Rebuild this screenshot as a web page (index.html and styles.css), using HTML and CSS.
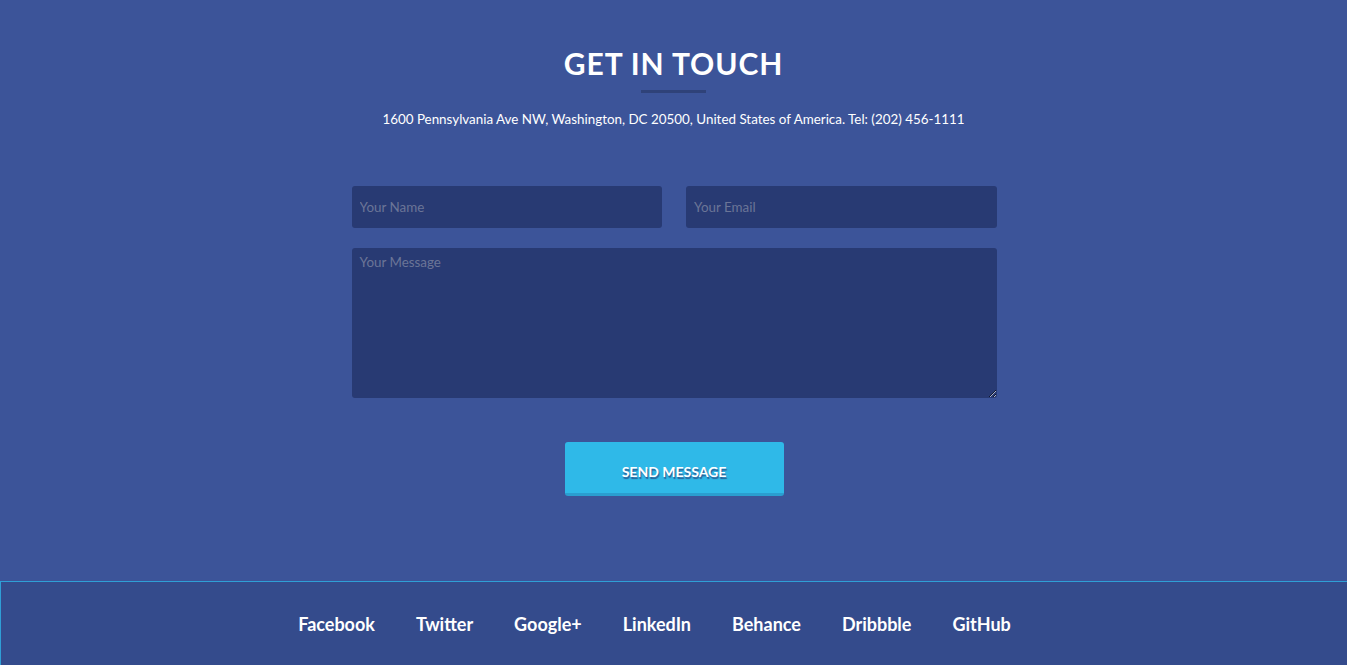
FILE: index.html
```html
<!DOCTYPE html>
<html lang="en">
<head>
<meta charset="utf-8">
<title>Get in touch</title>
<link rel="stylesheet" href="styles.css">
</head>
<body>
<section class="contact">
  <h2 class="contact-title">GET IN TOUCH</h2>
  <div class="title-rule"></div>
  <p class="address">1600 Pennsylvania Ave NW, Washington, DC 20500, United States of America. Tel: (202) 456-1111</p>
  <form class="contact-form">
    <div class="row">
      <input class="field" type="text" placeholder="Your Name">
      <input class="field" type="email" placeholder="Your Email">
    </div>
    <textarea class="field message" placeholder="Your Message"></textarea>
    <div class="actions">
      <button class="send" type="button">SEND MESSAGE</button>
    </div>
  </form>
</section>
<footer class="footer">
  <ul class="social">
    <li><a href="#">Facebook</a></li>
    <li><a href="#">Twitter</a></li>
    <li><a href="#">Google+</a></li>
    <li><a href="#">LinkedIn</a></li>
    <li><a href="#">Behance</a></li>
    <li><a href="#">Dribbble</a></li>
    <li><a href="#">GitHub</a></li>
  </ul>
</footer>
</body>
</html>
```
FILE: styles.css
```css
* { box-sizing: border-box; }
html, body { margin: 0; padding: 0; }
body {
  background: #3c5499;
  font-family: Lato, "Open Sans", sans-serif;
  color: #fff;
  height: 665px;
  overflow: hidden;
}
.contact {
  height: 581px;
  padding-top: 44px;
  display: flex;
  flex-direction: column;
  align-items: center;
}
.contact-title {
  margin: 0;
  font-size: 30px;
  font-weight: 700;
  letter-spacing: 0.9px;
  line-height: 38px;
}
.title-rule {
  width: 65px;
  height: 3px;
  background: #2f4279;
  margin-top: 8px;
}
.address {
  margin: 16px 0 0;
  font-size: 13.4px;
  line-height: 20px;
}
.contact-form {
  width: 645px;
  margin: 57px 0 0 1px;
  display: flex;
  flex-direction: column;
  gap: 20px;
}
.row {
  display: flex;
  gap: 24px;
}
.field {
  height: 42px;
  background: #283a73;
  border: none;
  border-radius: 3px;
  padding: 0 8px;
  font-family: inherit;
  font-size: 13.4px;
  color: #fff;
  outline: none;
}
.row .field {
  flex: 1;
  min-width: 0;
}
.field::placeholder { color: #6b7597; }
.message {
  flex: none;
  height: 150px;
  padding: 6px 8px;
  resize: vertical;
  display: block;
}
.actions {
  display: flex;
  justify-content: center;
  margin-top: 24px;
}
.send {
  width: 219px;
  height: 54px;
  background: #2fb9e8;
  border: none;
  border-bottom: 3px solid #2a9ed0;
  border-radius: 3px;
  color: #fff;
  font-family: inherit;
  font-weight: 700;
  font-size: 14px;
  text-shadow: 1px 2px 1px rgba(40, 58, 115, 0.7);
  padding-top: 9px;
}
.footer {
  height: 84px;
  background: #344b8c;
  border-top: 1px solid #2f9fd6;
  border-left: 1px solid #2f9fd6;
  display: flex;
  justify-content: center;
  align-items: center;
}
.social {
  list-style: none;
  margin: 0;
  padding: 0 0 0 2px;
  display: flex;
}
.social li { margin-right: 41px; }
.social a {
  color: #fff;
  text-decoration: none;
  font-weight: 700;
  font-size: 18px;
}
```
